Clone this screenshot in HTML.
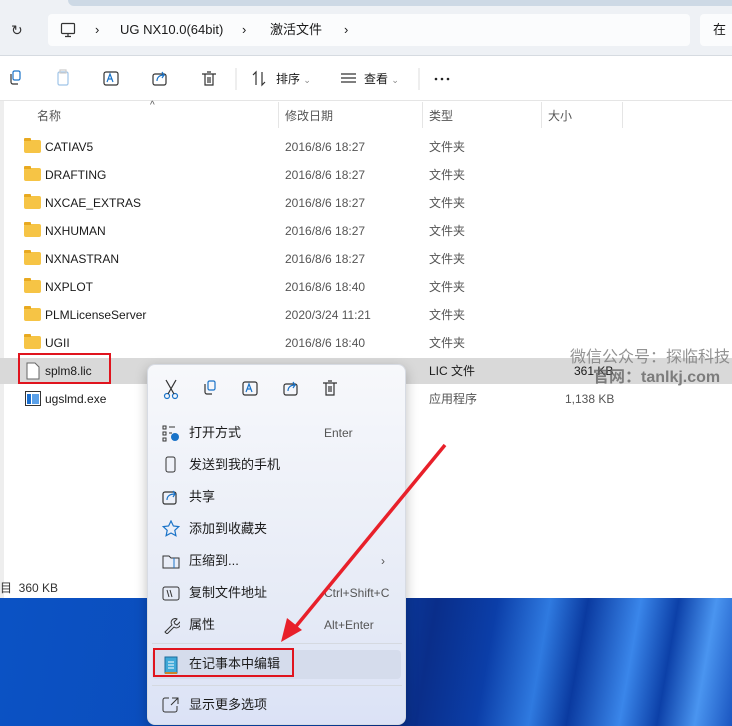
<!DOCTYPE html>
<html><head><meta charset="utf-8"><style>
*{margin:0;padding:0;box-sizing:border-box}
body{width:732px;height:726px;overflow:hidden;position:relative;font-family:"Liberation Sans","Noto Sans CJK SC",sans-serif;font-size:12px;line-height:14px;color:#1a1a1a;background:#fff}
.abs{position:absolute}
.top{left:0;top:0;width:732px;height:55px;background:#eef1f5}
.tab{left:68px;top:0;width:664px;height:6px;background:#cdd9e5;border-radius:0 0 0 6px}
.addr{left:48px;top:14px;width:642px;height:32px;background:#fbfcfd;border-radius:4px}
.srch{left:700px;top:14px;width:40px;height:32px;background:#fbfcfd;border-radius:4px}
.tb{left:0;top:55px;width:732px;height:46px;background:#fff;border-top:1px solid #d6dbe1;border-bottom:1px solid #e5e5e5}
.row{position:absolute;left:0;width:620px;height:28px}
.row span{position:absolute;top:7px;font-size:12px;color:#1a1a1a}
.gray{color:#555!important}
.fold{position:absolute;left:24px;top:7px;width:17px;height:13px;background:#f6c445;border-radius:2px}
.fold:before{content:"";position:absolute;left:0;top:-2px;width:7px;height:3px;background:#e8a920;border-radius:1px 1px 0 0}
.menu{left:147px;top:364px;width:259px;height:361px;background:linear-gradient(#f7f8fb,#e5eaf6 70%,#dbe2f6);border-radius:8px;border:1px solid #d7dbe3;box-shadow:0 4px 12px rgba(0,0,0,.25)}
.mi{position:absolute;left:0;width:259px;height:30px}
.mi .t{position:absolute;left:41px;top:8px;font-size:13px;color:#1a1a1a;line-height:14px}
.mi .k{position:absolute;left:176px;top:8px;font-size:12px;color:#555}
.ic{position:absolute;left:14px;top:6px}
</style></head><body>
<div class="abs top"></div>
<div class="abs tab"></div>
<div class="abs" style="left:11px;top:23px;font-size:14px;color:#333">↻</div>
<div class="abs addr"></div>
<div class="abs srch"></div>
<svg class="abs" style="left:60px;top:22px" width="16" height="16" viewBox="0 0 16 16"><rect x="1.5" y="1.5" width="13" height="10" rx="1" fill="none" stroke="#333" stroke-width="1.2"/><path d="M8 11.5v3M5 14.5h6" stroke="#333" stroke-width="1.2"/></svg>
<div class="abs" style="left:95px;top:23px;font-size:13px">›</div>
<div class="abs" style="left:120px;top:23px;font-size:13px">UG NX10.0(64bit)</div>
<div class="abs" style="left:242px;top:23px;font-size:13px">›</div>
<div class="abs" style="left:270px;top:23px;font-size:13px">激活文件</div>
<div class="abs" style="left:344px;top:23px;font-size:13px">›</div>
<div class="abs" style="left:713px;top:23px;font-size:13px">在</div>
<div class="abs tb"></div>
<svg class="abs" style="left:0;top:68px" width="460" height="22" viewBox="0 0 460 22">
<g fill="none" stroke-width="1.2">
<rect x="13" y="3" width="7" height="9" rx="1.5" stroke="#1a73c8"/><path d="M11 6v8a2 2 0 0 0 2 2h5" stroke="#333"/>
<rect x="58" y="4" width="10" height="13" rx="1.5" stroke="#9fc4e8"/><rect x="60" y="2" width="6" height="3" stroke="#ccc"/>
<rect x="104" y="4" width="14" height="13" rx="2" stroke="#333"/><path d="M107 14l3-8 3 8M108 11h4" stroke="#1a73c8"/>
<rect x="153" y="6" width="13" height="11" rx="2" stroke="#333"/><path d="M157 13c0-4 3-6 7-6l-2-3M164 7l-2 3" stroke="#1a73c8"/>
<path d="M202 6h14M205 6v11h8V6M207 4h4M208 9v6M210 9v6" stroke="#333"/>
<path d="M256 17V4l-3 3M262 4v13l3-3" stroke="#333"/>
<path d="M341 6h15M341 10h15M341 14h15" stroke="#333"/>
</g>
<line x1="236" y1="0" x2="236" y2="22" stroke="#ddd"/>
<line x1="419" y1="0" x2="419" y2="22" stroke="#ddd"/>
<circle cx="436" cy="11" r="1.3" fill="#222"/><circle cx="442" cy="11" r="1.3" fill="#222"/><circle cx="448" cy="11" r="1.3" fill="#222"/>
</svg>
<div class="abs" style="left:276px;top:72px;font-size:12px">排序 <span style="color:#888;font-size:9px">⌄</span></div>
<div class="abs" style="left:364px;top:72px;font-size:12px">查看 <span style="color:#888;font-size:9px">⌄</span></div>
<div class="abs" style="left:0;top:101px;width:4px;height:497px;background:#eee"></div>
<div class="abs" style="left:150px;top:99px;font-size:10px;color:#555">^</div>
<div class="abs" style="left:37px;top:109px;color:#555">名称</div>
<div class="abs" style="left:278px;top:102px;width:1px;height:26px;background:#e5e5e5"></div>
<div class="abs" style="left:285px;top:109px;color:#555">修改日期</div>
<div class="abs" style="left:422px;top:102px;width:1px;height:26px;background:#e5e5e5"></div>
<div class="abs" style="left:429px;top:109px;color:#555">类型</div>
<div class="abs" style="left:541px;top:102px;width:1px;height:26px;background:#e5e5e5"></div>
<div class="abs" style="left:548px;top:109px;color:#555">大小</div>
<div class="abs" style="left:622px;top:102px;width:1px;height:26px;background:#e5e5e5"></div>

<div class="row" style="top:133px"><div class="fold"></div><span style="left:45px">CATIAV5</span><span class="gray" style="left:285px">2016/8/6 18:27</span><span class="gray" style="left:429px">文件夹</span></div>
<div class="row" style="top:161px"><div class="fold"></div><span style="left:45px">DRAFTING</span><span class="gray" style="left:285px">2016/8/6 18:27</span><span class="gray" style="left:429px">文件夹</span></div>
<div class="row" style="top:189px"><div class="fold"></div><span style="left:45px">NXCAE_EXTRAS</span><span class="gray" style="left:285px">2016/8/6 18:27</span><span class="gray" style="left:429px">文件夹</span></div>
<div class="row" style="top:217px"><div class="fold"></div><span style="left:45px">NXHUMAN</span><span class="gray" style="left:285px">2016/8/6 18:27</span><span class="gray" style="left:429px">文件夹</span></div>
<div class="row" style="top:245px"><div class="fold"></div><span style="left:45px">NXNASTRAN</span><span class="gray" style="left:285px">2016/8/6 18:27</span><span class="gray" style="left:429px">文件夹</span></div>
<div class="row" style="top:273px"><div class="fold"></div><span style="left:45px">NXPLOT</span><span class="gray" style="left:285px">2016/8/6 18:40</span><span class="gray" style="left:429px">文件夹</span></div>
<div class="row" style="top:301px"><div class="fold"></div><span style="left:45px">PLMLicenseServer</span><span class="gray" style="left:285px">2020/3/24 11:21</span><span class="gray" style="left:429px">文件夹</span></div>
<div class="row" style="top:329px"><div class="fold"></div><span style="left:45px">UGII</span><span class="gray" style="left:285px">2016/8/6 18:40</span><span class="gray" style="left:429px">文件夹</span></div>
<div class="row" style="top:358px;height:26px;background:#d9d9d9;width:732px"><svg style="position:absolute;left:26px;top:4px" width="14" height="18"><path d="M1 1h8l4 4v12H1z" fill="#fff" stroke="#666"/></svg><span style="left:45px;top:6px">splm8.lic</span><span style="left:429px;top:6px">LIC 文件</span><span style="left:574px;top:6px">361 KB</span></div>
<div class="abs" style="left:18px;top:353px;width:93px;height:31px;border:2px solid #e0141e"></div>
<div class="row" style="top:385px"><svg style="position:absolute;left:25px;top:6px" width="16" height="15"><rect x="0.5" y="0.5" width="15" height="14" fill="#fff" stroke="#333"/><rect x="2" y="3" width="4" height="10" fill="#1a6fd0"/><rect x="7" y="3" width="7" height="10" fill="#5aa0e8"/></svg><span style="left:45px">ugslmd.exe</span><span class="gray" style="left:429px">应用程序</span><span class="gray" style="left:565px">1,138 KB</span></div>
<div class="abs" style="left:570px;top:349px;font-size:16px;line-height:18px;color:rgba(120,120,120,.8)">微信公众号：探临科技</div>
<div class="abs" style="left:593px;top:369px;font-size:16px;line-height:18px;color:rgba(100,100,100,.8);font-weight:bold">官网：tanlkj.com</div>
<div class="abs" style="left:0;top:581px;color:#333">目 &nbsp;360 KB</div>
<div class="abs" style="left:0;top:598px;width:732px;height:128px;background:linear-gradient(100deg,#0b52c4 0%,#0a4ab8 45%,#0a2e8a 58%,#0b3ea8 66%,#2f7ae0 73%,#0a3aa0 78%,#3a86ea 85%,#0c40a8 90%,#4a95f0 95%,#1a55c0 100%)"></div>

<div class="abs menu">
<svg style="position:absolute;left:0;top:0" width="259" height="50" viewBox="0 0 259 50"><g fill="none" stroke-width="1.2">
<circle cx="19" cy="31" r="2.5" stroke="#1a73c8"/><circle cx="27" cy="31" r="2.5" stroke="#1a73c8"/><path d="M18 15l8 14M28 15l-8 14" stroke="#333"/>
<rect x="60" y="16" width="7" height="9" rx="1.5" stroke="#1a73c8"/><path d="M57 19v8a2 2 0 0 0 2 2h5" stroke="#333"/>
<rect x="95" y="17" width="14" height="13" rx="2" stroke="#333"/><path d="M98 27l3-8 3 8M99 24h4" stroke="#1a73c8"/>
<rect x="136" y="19" width="13" height="11" rx="2" stroke="#333"/><path d="M140 26c0-4 3-6 7-6l-2-3M147 20l-2 3" stroke="#1a73c8"/>
<path d="M175 18h14M178 18v12h8V18M180 16h4M181 21v6M183 21v6" stroke="#333"/></g></svg>
<div class="mi" style="top:53px"><svg class="ic" width="18" height="18"><g fill="none" stroke="#333"><rect x="1" y="2" width="3" height="3"/><rect x="1" y="8" width="3" height="3"/><rect x="1" y="14" width="3" height="3"/><path d="M7 3h6M7 9h3"/></g><circle cx="13" cy="13" r="4" fill="#1a73c8"/></svg><span class="t">打开方式</span><span class="k">Enter</span></div>
<div class="mi" style="top:85px"><svg class="ic" width="18" height="18"><rect x="4" y="1" width="9" height="15" rx="2" fill="none" stroke="#333"/></svg><span class="t">发送到我的手机</span></div>
<div class="mi" style="top:117px"><svg class="ic" width="18" height="18"><g fill="none" stroke-width="1.2"><rect x="1" y="4" width="13" height="12" rx="2" stroke="#333"/><path d="M5 12c0-4 3-6 8-6l-2-3M13 6l-2 3" stroke="#1a73c8"/></g></svg><span class="t">共享</span></div>
<div class="mi" style="top:149px"><svg class="ic" width="18" height="18"><path d="M9 1l2.4 5 5.4.6-4 3.7 1.1 5.4L9 13 4.1 15.7l1.1-5.4-4-3.7 5.4-.6z" fill="none" stroke="#1a73c8" stroke-width="1.2"/></svg><span class="t">添加到收藏夹</span></div>
<div class="mi" style="top:181px"><svg class="ic" width="18" height="18"><path d="M1 4h6l2 2h8v10H1z" fill="none" stroke="#333"/><path d="M12 6v10" stroke="#1a73c8"/></svg><span class="t">压缩到...</span><span class="k" style="left:233px">›</span></div>
<div class="mi" style="top:213px"><svg class="ic" width="18" height="18"><rect x="1" y="3" width="16" height="13" rx="2" fill="none" stroke="#333"/><path d="M5 6l2 7M8 6l2 7" stroke="#333"/></svg><span class="t">复制文件地址</span><span class="k">Ctrl+Shift+C</span></div>
<div class="mi" style="top:245px"><svg class="ic" width="18" height="18"><path d="M3 16l7-7a4 4 0 0 1 5-6l-3 3 1 2 2 1 3-3a4 4 0 0 1-6 5l-7 7z" fill="none" stroke="#333"/></svg><span class="t">属性</span><span class="k">Alt+Enter</span></div>
<div style="position:absolute;left:4px;top:278px;width:250px;height:1px;background:#d5d9e0"></div>
<div class="mi" style="top:285px;left:4px;width:249px;height:29px;background:#d5dcec;border-radius:4px"></div>
<div class="mi" style="top:284px"><svg class="ic" width="18" height="20"><rect x="3" y="2" width="12" height="16" fill="#3fa9d8" stroke="#1c6b9c"/><path d="M6 7h6M6 10h6M6 13h6" stroke="#fff"/><rect x="3" y="17" width="12" height="2" fill="#c8842c"/></svg><span class="t">在记事本中编辑</span></div>
<div style="position:absolute;left:4px;top:320px;width:250px;height:1px;background:#d5d9e0"></div>
<div class="mi" style="top:325px"><svg class="ic" width="18" height="18"><path d="M7 2H3a2 2 0 0 0-2 2v10a2 2 0 0 0 2 2h10a2 2 0 0 0 2-2v-4M10 2h6v6M16 2l-7 7" fill="none" stroke="#333"/></svg><span class="t">显示更多选项</span></div>
</div>
<div class="abs" style="left:153px;top:648px;width:141px;height:29px;border:2px solid #e0141e"></div>
<svg class="abs" style="left:0;top:0" width="732" height="726"><line x1="445" y1="445" x2="293" y2="630" stroke="#e8202a" stroke-width="3.5"/><path d="M281 642l6-24 15 12z" fill="#e8202a"/></svg>
</body></html>
